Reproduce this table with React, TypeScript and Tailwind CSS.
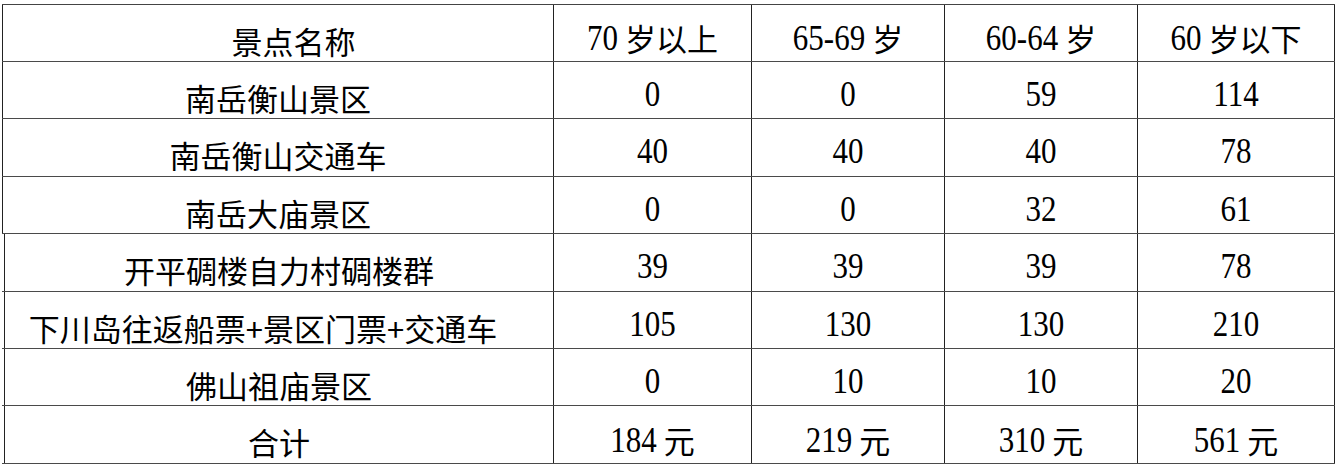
const rows: { name: string; vals: string[]; h: string; shift?: boolean; nameCls?: string }[] = [
  { name: '景点名称', vals: ['70 岁以上', '65-69 岁', '60-64 岁', '60 岁以下'], h: 'h-[57px]', nameCls: 'pl-[31px]' },
  { name: '南岳衡山景区', vals: ['0', '0', '59', '114'], h: 'h-[57px]' },
  { name: '南岳衡山交通车', vals: ['40', '40', '40', '78'], h: 'h-[58px]' },
  { name: '南岳大庙景区', vals: ['0', '0', '32', '61'], h: 'h-[57px]' },
  { name: '开平碉楼自力村碉楼群', vals: ['39', '39', '39', '78'], h: 'h-[58px]', shift: true },
  { name: '下川岛往返船票+景区门票+交通车', vals: ['105', '130', '130', '210'], h: 'h-[57px]', shift: true, nameCls: 'pr-[32px]' },
  { name: '佛山祖庙景区', vals: ['0', '10', '10', '20'], h: 'h-[57px]', shift: true },
  { name: '合计', vals: ['184 元', '219 元', '310 元', '561 元'], h: 'h-[58px]', shift: true },
];

// digits in the source are a tall, narrow serif
function Value({ text }: { text: string }) {
  const parts = text.split(/(\d[\d-]*)/).filter(Boolean);
  return (
    <span>
      {parts.map((p, i) =>
        /\d/.test(p) ? (
          <span key={i} className="inline-block scale-y-[1.13] origin-bottom">
            {p}
          </span>
        ) : (
          <span key={i} className="font-['Noto_Sans_CJK_SC',sans-serif]">
            {p}
          </span>
        )
      )}
    </span>
  );
}

export default function App() {
  return (
    <div className="w-[1338px] h-[468px] bg-white pt-[4px] pl-[2px] text-black font-['Liberation_Serif','Noto_Sans_CJK_SC',serif] text-[31px] leading-none">
      <div className="w-[1333px] border-t border-[#444]">
        {rows.map((r, i) => (
          <div
            key={i}
            className={`grid border-b border-[#4a4a4a] ${r.h} ${
              r.shift
                ? 'grid-cols-[2px_550px_198px_193px_193px_197px]'
                : 'grid-cols-[0px_552px_198px_193px_193px_197px]'
            }`}
          >
            <div />
            <div
              className={`flex items-center justify-center border-l border-r border-[#222] pt-[14px] font-['Noto_Sans_CJK_SC',sans-serif] ${
                r.nameCls ?? ''
              }`}
            >
              {r.name}
            </div>
            {r.vals.map((v, j) => (
              <div key={j} className="flex items-center justify-center border-r border-[#222] pt-[12px]">
                <Value text={v} />
              </div>
            ))}
          </div>
        ))}
      </div>
    </div>
  );
}
